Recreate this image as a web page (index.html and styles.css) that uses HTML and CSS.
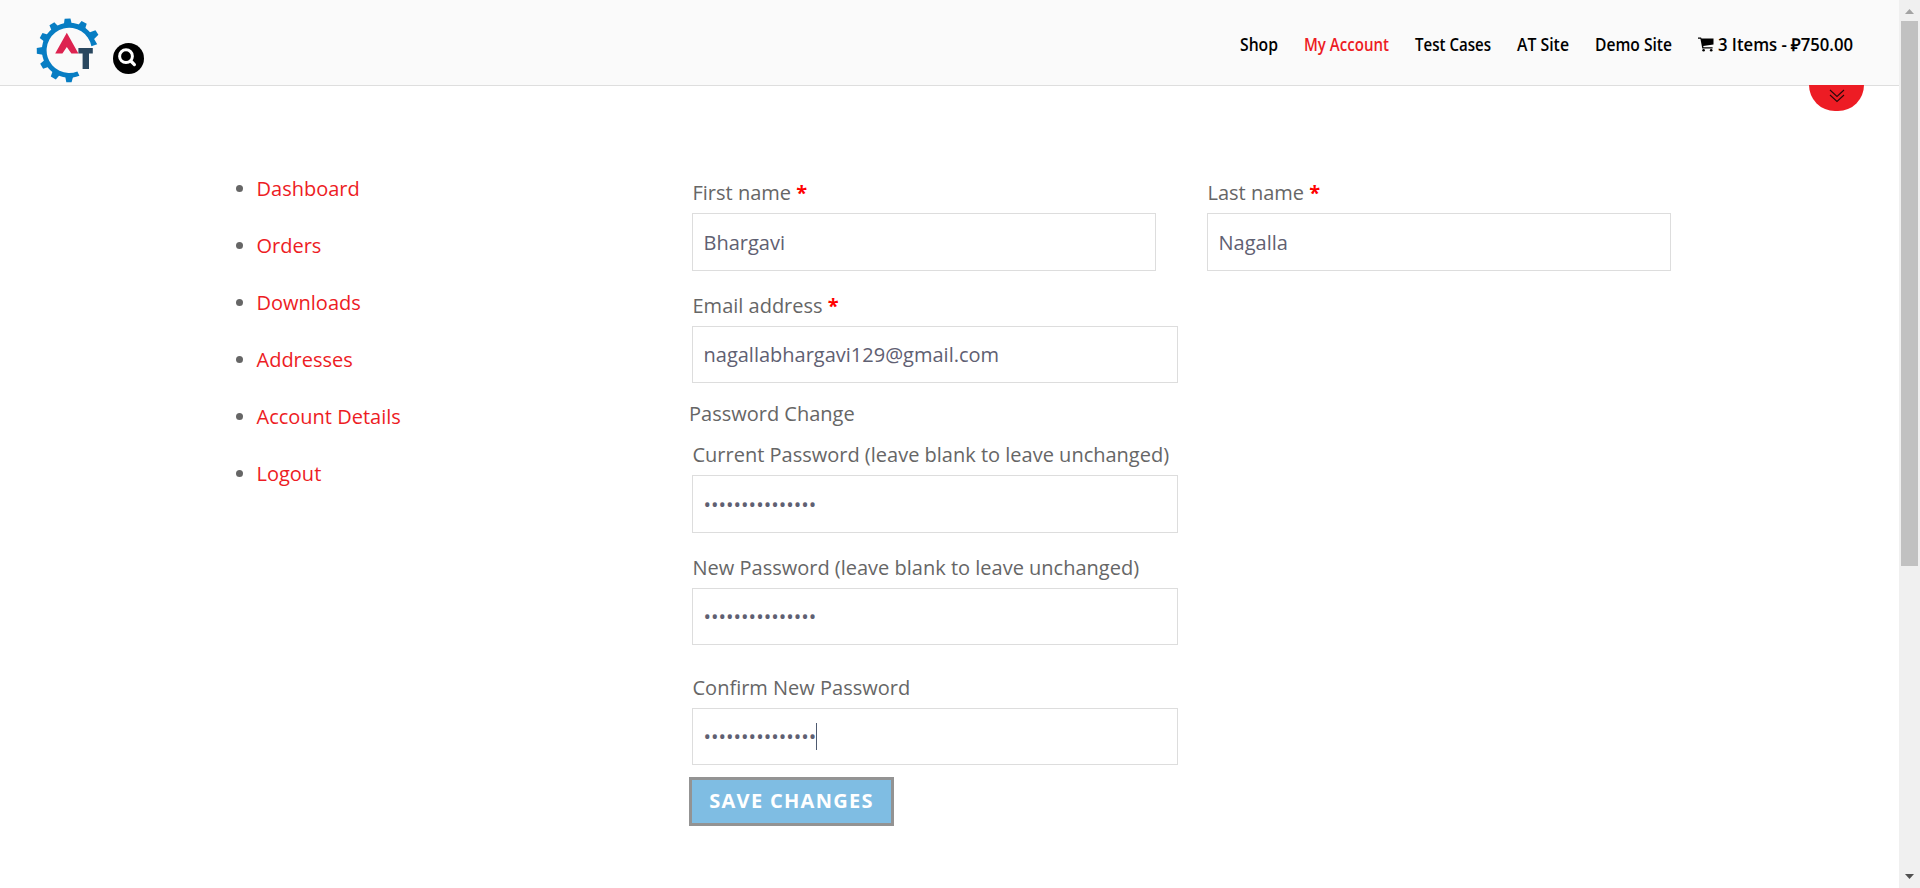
FILE: index.html
```html
<!DOCTYPE html>
<html lang="en">
<head>
<meta charset="utf-8">
<title>My Account</title>
<link rel="stylesheet" href="styles.css">
</head>
<body>
<div class="window">
  <div class="page">
    <header class="header">
      <div class="brand">
        <svg class="logo" width="66" height="68" viewBox="0 0 66 68">
          <g fill="#077dc3" transform="translate(33.2 34.4)">
            <path d="M10.2 25.4A27.3 27.3 0 0 1 -27.3 0A27.3 27.3 0 0 1 22 -16.5L28 -6.2L22.2 -4.2A22.6 22.6 0 1 0 8.2 21.1Z"/>
            <path d="M-4.2 25L-2.9 31.8H2.4L4.2 25Z"/>
            <path transform="rotate(30)" d="M-4.2 25L-2.9 31.8H2.9L4.2 25Z"/>
            <path transform="rotate(60)" d="M-4.2 25L-2.9 31.8H2.9L4.2 25Z"/>
            <path transform="rotate(89)" d="M-4.2 25L-2.9 32.4H2.9L4.2 25Z"/>
            <path transform="rotate(118)" d="M-4.2 25L-2.9 31.8H2.9L4.2 25Z"/>
            <path transform="rotate(147)" d="M-4.2 25L-2.9 31.8H2.9L4.2 25Z"/>
            <path transform="rotate(177)" d="M-4.2 25L-2.9 31.8H2.9L4.2 25Z"/>
            <path transform="rotate(208)" d="M-4.2 25L-2.9 31.8H2.9L4.2 25Z"/>
            <path transform="rotate(237)" d="M-4.8 23L-2.8 33H2.6L4.8 23Z"/>
          </g>
          <path fill="#dd2350" d="M30.8 16.7L42.4 37.6H35.4L30.8 31L26.4 37.6H19.2Z"/>
          <path fill="#29475f" d="M42.4 32H56.8V37.6H53V53H46.6V37.6H42.4Z"/>
        </svg>
        <svg class="search" width="31" height="31" viewBox="0 0 31 31">
          <circle cx="15.5" cy="15.5" r="15.5"/>
          <circle cx="13" cy="13.2" r="6.4" fill="none" stroke="#fff" stroke-width="3"/>
          <path d="M17.8 18L21.4 21.6" stroke="#fff" stroke-width="3.2" stroke-linecap="round"/>
        </svg>
      </div>
      <nav class="nav">
        <a class="nav-link"><svg width="38" height="34"><text y="23" textLength="38" lengthAdjust="spacingAndGlyphs">Shop</text></svg></a>
        <a class="nav-link account"><svg width="85" height="34"><text y="23" textLength="85" lengthAdjust="spacingAndGlyphs">My Account</text></svg></a>
        <a class="nav-link"><svg width="76" height="34"><text y="23" textLength="76" lengthAdjust="spacingAndGlyphs">Test Cases</text></svg></a>
        <a class="nav-link"><svg width="52" height="34"><text y="23" textLength="52" lengthAdjust="spacingAndGlyphs">AT Site</text></svg></a>
        <a class="nav-link"><svg width="77" height="34"><text y="23" textLength="77" lengthAdjust="spacingAndGlyphs">Demo Site</text></svg></a>
        <a class="nav-link cart"><svg class="cart-icon" width="16" height="15" viewBox="0 0 16 15"><path d="M0 .5H2.8Q3.3.5 3.5 1.6H15.5V7.6L5.2 9L5.5 10.3H14.6V11.5H4.3L2.4 1.7H0Z"/><circle cx="5.6" cy="13.2" r="1.3"/><circle cx="13.2" cy="13.2" r="1.3"/></svg><svg width="136" height="34"><text y="23" textLength="135" lengthAdjust="spacingAndGlyphs">3 Items - ₽750.00</text></svg></a>
      </nav>
      <a class="toggle"><svg width="16" height="14" viewBox="0 0 16 14" fill="none" stroke="#28080a" stroke-width="1.1"><path d="M1 1L8 7.5L15 1M1 6L8 12.5L15 6"/></svg></a>
    </header>
    <main class="content">
      <ul class="menu">
        <li><a>Dashboard</a></li>
        <li><a>Orders</a></li>
        <li><a>Downloads</a></li>
        <li><a>Addresses</a></li>
        <li><a>Account Details</a></li>
        <li><a>Logout</a></li>
      </ul>
      <form class="form">
        <div class="names">
          <div class="field"><label>First name <b class="req">*</b></label><input class="input tall" type="text" value="Bhargavi"></div>
          <div class="field"><label>Last name <b class="req">*</b></label><input class="input tall" type="text" value="Nagalla"></div>
        </div>
        <div class="field wide email"><label>Email address <b class="req">*</b></label><input class="input" type="text" value="nagallabhargavi129@gmail.com"></div>
        <div class="legend">Password Change</div>
        <div class="field wide current"><label>Current Password (leave blank to leave unchanged)</label><input class="input tall" type="password" value="abcdefghijklmno"></div>
        <div class="field wide new"><label>New Password (leave blank to leave unchanged)</label><input class="input" type="password" value="abcdefghijklmno"></div>
        <div class="field wide confirm"><label>Confirm New Password</label><div class="input typed"><span>•••••••••••••••</span><i class="caret"></i></div></div>
        <button class="save" type="button">SAVE CHANGES</button>
      </form>
    </main>
  </div>
  <div class="scrollbar">
    <svg width="9" height="5" viewBox="0 0 9 5"><path fill="#a3a3a3" d="M4.5 0L9 5H0Z"/></svg>
    <div class="thumb"></div>
    <svg class="down" width="9" height="5" viewBox="0 0 9 5"><path fill="#505050" d="M4.5 5L9 0H0Z"/></svg>
  </div>
</div>
</body>
</html>
```
FILE: styles.css
```css
* { box-sizing: border-box; }
body { margin: 0; background: #fff; color: #666; font: 20px/34px "Open Sans", sans-serif; overflow: hidden; }
.window { display: flex; height: 888px; }
.page { flex: 1; min-width: 0; }
.header { position: relative; height: 86px; display: flex; justify-content: space-between; background: #fafafa; border-bottom: 1px solid #dedede; }
.brand { display: flex; padding: 16px 0 0 36px; }
.search { margin: 27px 0 0 11px; }
.nav { display: flex; gap: 26px; padding: 28px 45px 0 0; font: 600 17.5px/34px "Open Sans", sans-serif; color: #000; }
.nav-link { display: flex; fill: currentColor; }
.nav-link svg { overflow: visible; }
.account { color: #ed1c24; }
.cart { gap: 4px; }
.cart-icon { margin-top: 9px; flex: none; }
.toggle { position: absolute; left: 1809px; top: 85px; width: 55px; height: 26px; border-radius: 0 0 28px 28px; background: #ed1c24; display: flex; justify-content: center; padding-top: 4px; }
.content { display: flex; }
.menu { width: 435px; margin: 74px 0 0 217px; padding: 0 0 0 39.5px; line-height: 57px; }
.menu a { color: #ed1c24; }
.form { width: 982px; margin: 92px 0 0 37px; display: flex; flex-direction: column; }
.names { display: flex; gap: 51px; padding-left: 3px; }
.field { display: flex; flex-direction: column; width: 464px; }
.field label { height: 35px; line-height: 29px; padding-left: .5px; white-space: nowrap; }
.wide { width: 486px; margin-left: 3px; }
.req { color: #f00; }
.input { width: 100%; height: 57px; margin: 0; padding: 0 10.5px; border: 1px solid #ddd; border-radius: 0; background: #fff; color: #5f6072; font: 20px/55px "Open Sans", sans-serif; outline: 0; }
.tall { height: 58px; }
.email { margin-top: 20px; }
.legend { height: 34px; margin-top: 14px; }
.current { margin-top: 9px; }
.new { margin-top: 20px; }
.confirm { margin-top: 28px; }
.typed { display: flex; align-items: center; }
.caret { width: 1px; height: 27px; background: #4e5a70; }
.save { align-self: flex-start; width: 205px; height: 49px; margin-top: 12px; padding: 0 0 2px; border: 3px solid #939393; background: #7fbde3; color: #fff; font: 700 20px/40px "Open Sans", sans-serif; letter-spacing: 1.3px; }
.scrollbar { width: 21px; background: #f0f0f0; display: flex; flex-direction: column; align-items: center; padding: 9px 0; }
.thumb { width: 17px; height: 545px; margin-top: 7px; background: #c1c1c1; }
.down { margin-top: auto; }
```
